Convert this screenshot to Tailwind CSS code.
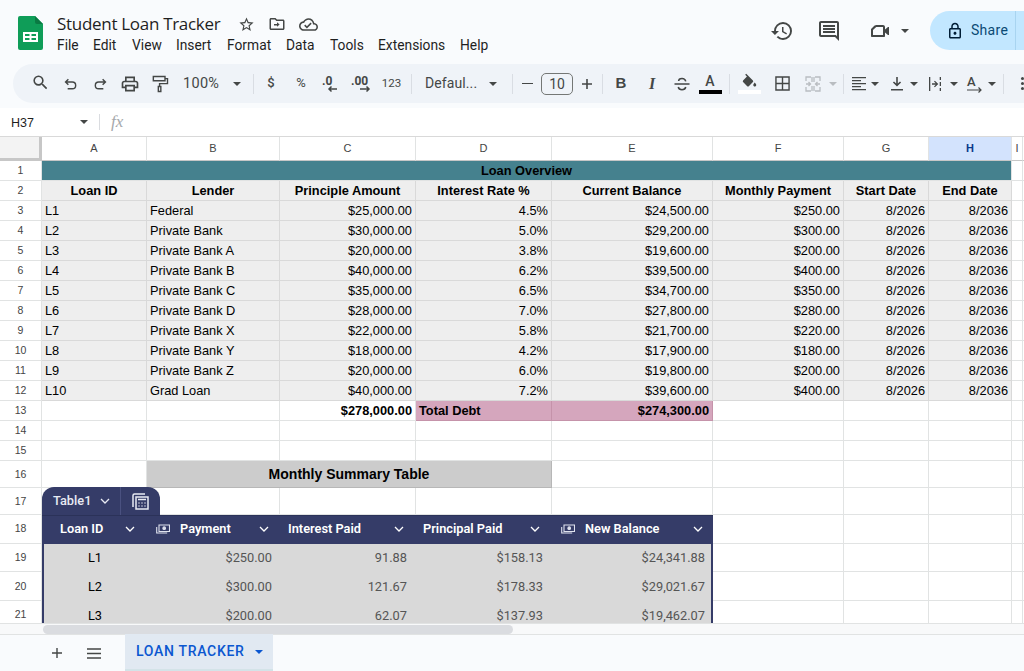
<!DOCTYPE html>
<html>
<head>
<meta charset="utf-8">
<script src="https://cdn.jsdelivr.net/npm/@tailwindcss/browser@4"></script>
<title>Student Loan Tracker</title>
</head>
<body class="w-[1024px] h-[671px] overflow-hidden bg-[#f9fbfd] font-['Roboto',sans-serif] text-[#444746]">
<div class="flex flex-col h-[671px]">

<!-- Title bar -->
<header class="h-[64px] shrink-0 flex items-start overflow-hidden">
  <svg class="ml-[18px] mt-[16px] shrink-0" width="25" height="34" viewBox="0 0 25 34"><path d="M2 0h15l8 8v24a2 2 0 0 1-2 2H2a2 2 0 0 1-2-2V2a2 2 0 0 1 2-2z" fill="#0f9d58"/><path d="M17 0l8 8h-6a2 2 0 0 1-2-2z" fill="#0a7a43"/><path d="M5 16h15v10H5z" fill="#fff"/><path d="M7 18h4.5v2H7zM13.5 18H18v2h-4.5zM7 22h4.5v2H7zM13.5 22H18v2h-4.5z" fill="#0f9d58"/></svg>
  <div class="ml-[14px] mt-[12px] w-[450px] shrink-0">
    <div class="flex items-center h-[24px]">
      <span class="font-['Open_Sans',sans-serif] text-[17px] text-[#1f1f1f] w-[182px] tracking-[-0.3px] whitespace-nowrap">Student Loan Tracker</span>
      <svg class="w-[17px] h-[17px] -ml-[1px] fill-[#444746]" viewBox="0 0 24 24"><path d="M22 9.24l-7.19-.62L12 2 9.19 8.63 2 9.24l5.46 4.73L5.82 21 12 17.27 18.18 21l-1.63-7.03L22 9.24zM12 15.4l-3.76 2.27 1-4.28-3.32-2.88 4.38-.38L12 6.1l1.71 4.04 4.38.38-3.32 2.88 1 4.28L12 15.4z"/></svg>
      <svg class="w-[18px] h-[18px] ml-[13px] fill-[#444746]" viewBox="0 0 24 24"><path d="M20 6h-8l-2-2H4c-1.1 0-2 .9-2 2v12c0 1.1.9 2 2 2h16c1.1 0 2-.9 2-2V8c0-1.1-.9-2-2-2zm0 12H4V6h5.17l2 2H20v10zm-8-2.5V14H8v-2h4v-2.5l3.5 3z"/></svg>
      <svg class="w-[19px] h-[19px] ml-[13px] fill-[#444746]" viewBox="0 0 24 24"><path d="M19.35 10.04C18.67 6.59 15.64 4 12 4 9.11 4 6.6 5.64 5.35 8.04 2.34 8.36 0 10.91 0 14c0 3.31 2.69 6 6 6h13c2.76 0 5-2.24 5-5 0-2.64-2.05-4.78-4.65-4.96zM19 18H6c-2.21 0-4-1.79-4-4 0-2.05 1.53-3.76 3.56-3.97l1.07-.11.5-.95C8.08 7.14 9.94 6 12 6c2.62 0 4.88 1.86 5.39 4.43l.3 1.5 1.53.11c1.56.1 2.78 1.41 2.78 2.96 0 1.65-1.35 3-3 3zm-9-3.82l-2.09-2.09L6.5 13.5 10 17l6.01-6.01-1.41-1.41z"/></svg>
    </div>
    <nav class="flex h-[19px] items-center text-[13.8px] text-[#1f1f1f] *:shrink-0">
      <span class="w-[36px]">File</span><span class="w-[39px]">Edit</span><span class="w-[44px]">View</span><span class="w-[51px]">Insert</span><span class="w-[59px]">Format</span><span class="w-[44px]">Data</span><span class="w-[48px]">Tools</span><span class="w-[82px]">Extensions</span><span>Help</span>
    </nav>
  </div>
  <div class="ml-auto mr-[-20px] mt-[11px] flex items-center shrink-0">
    <svg class="w-[24px] h-[24px] fill-[#444746]" viewBox="0 0 24 24"><path d="M13 3a9 9 0 0 0-9 9H1l3.89 3.89.07.14L9 12H6c0-3.87 3.13-7 7-7s7 3.13 7 7-3.13 7-7 7c-1.93 0-3.68-.79-4.94-2.06l-1.42 1.42A8.954 8.954 0 0 0 13 21a9 9 0 0 0 0-18zm-1 5v5l4.28 2.54.72-1.21-3.5-2.08V8H12z"/></svg>
    <svg class="w-[24px] h-[24px] ml-[23px] fill-[#444746]" viewBox="0 0 24 24"><path d="M20 2H4c-1.1 0-2 .9-2 2v12c0 1.1.9 2 2 2h14l4 4V4c0-1.1-.9-2-2-2zm0 15.17L18.83 16H4V4h16v13.17zM6 12h12v2H6zM6 9h12v2H6zM6 6h12v2H6z"/></svg>
    <svg class="w-[24px] h-[24px] ml-[27px] fill-[#444746]" viewBox="0 0 24 24"><path d="M8 6h7c1.1 0 2 .9 2 2v2.5l3-2.5h1v8h-1l-3-2.5V17c0 .6-.4 1-1 1H4c-.6 0-1-.4-1-1v-6.5c0-.3.1-.5.3-.7l3-3c.2-.2.4-.3.7-.3zm.2 2L5 11v5h10V8H8.2z"/></svg>
    <svg class="w-[8px] h-[4px] ml-[9px] fill-[#444746]" viewBox="0 0 8 4"><path d="M0 0h8L4 4z"/></svg>
    <div class="ml-[21px] w-[114px] h-[39px] rounded-l-full bg-[#c2e7ff] flex items-center pl-[17px]">
      <svg class="w-[16px] h-[18px] fill-[#001d35]" viewBox="2 0 20 24"><path d="M18 8h-1V6c0-2.76-2.24-5-5-5S7 3.24 7 6v2H6c-1.1 0-2 .9-2 2v10c0 1.1.9 2 2 2h12c1.1 0 2-.9 2-2V10c0-1.1-.9-2-2-2zM9 6c0-1.66 1.34-3 3-3s3 1.34 3 3v2H9V6zm9 14H6V10h12v10zm-6-3c1.1 0 2-.9 2-2s-.9-2-2-2-2 .9-2 2 .9 2 2 2z"/></svg>
      <span class="ml-[8px] text-[14px] font-normal tracking-[0.3px] text-[#0b4a74]">Share</span>
      <span class="ml-[7px] w-px h-[39px] bg-[#a8d4f0]"></span>
    </div>
  </div>
</header>

<!-- Toolbar -->
<div class="h-[39px] shrink-0 ml-[13px] mr-[-30px] rounded-l-full bg-[#eff3f8] flex items-center pl-[13px] text-[#444746] overflow-hidden *:shrink-0">
  <span class="w-[29px] flex justify-center"><svg class="w-[19px] h-[19px] -translate-y-[1px] fill-[#444746]" viewBox="0 0 24 24"><path d="M15.5 14h-.79l-.28-.27A6.471 6.471 0 0 0 16 9.5 6.5 6.5 0 1 0 9.5 16c1.61 0 3.09-.59 4.23-1.57l.27.28v.79l5 4.99L20.49 19l-4.99-5zm-6 0C7.01 14 5 11.99 5 9.5S7.01 5 9.500 5 14 7.010 14 9.500 11.990 14 9.500 14z"/></svg></span>
  <span class="w-[30px] flex justify-center"><svg class="w-[17px] h-[17px] translate-y-[1px] fill-none stroke-[#444746] stroke-2" viewBox="0 0 24 24"><path d="M9 4.500 5 8.500l4 4M5 8.500h9.500a4.800 4.800 0 0 1 0 9.600H8"/></svg></span>
  <span class="w-[30px] flex justify-center"><svg class="w-[17px] h-[17px] translate-y-[1px] fill-none stroke-[#444746] stroke-2" viewBox="0 0 24 24"><path d="m15 4.500 4 4-4 4M19 8.500H9.500a4.800 4.800 0 0 0 0 9.600H16"/></svg></span>
  <span class="w-[30px] flex justify-center"><svg class="w-[20px] h-[20px] fill-[#444746]" viewBox="0 0 24 24"><path d="M19 8h-1V3H6v5H5c-1.66 0-3 1.34-3 3v6h4v4h12v-4h4v-6c0-1.66-1.34-3-3-3zM8 5h8v3H8V5zm8 12v2H8v-4h8v2zm2-2v-2H6v2H4v-4c0-.55.45-1 1-1h14c.55 0 1 .45 1 1v4h-2z"/></svg></span>
  <span class="w-[29px] flex justify-center"><svg class="w-[20px] h-[20px] fill-none stroke-[#444746] stroke-[1.7]" viewBox="0 0 24 24"><path d="M4 3h14v5H4zM18 5.500h3v6h-9.500V15M10 15h3v6h-3z"/></svg></span>
  <span class="ml-[9px] w-[49px] text-[14.5px] tracking-[0.3px]">100%</span>
  <svg class="ml-[1px] w-[8px] h-[4px] fill-[#444746]" viewBox="0 0 8 4"><path d="M0 0h8L4 4z"/></svg>
  <span class="ml-[12px] w-px h-[20px] bg-[#d9dde3]"></span>
  <span class="ml-[2px] w-[30px] text-center text-[13px] font-medium -translate-y-[1px]">$</span>
  <span class="w-[30px] text-center text-[13px] -translate-y-[1px]">%</span>
  <span class="w-[30px] flex justify-center"><svg class="w-[22px] h-[22px]" viewBox="0 0 22 22"><text x="2" y="12" font-size="12" font-weight="700" fill="#444746" font-family="Roboto">.0</text><path d="M17 16H9M11.500 13.500 9 16l2.500 2.500" fill="none" stroke="#444746" stroke-width="1.5"/></svg></span>
  <span class="w-[31px] flex justify-center"><svg class="w-[24px] h-[22px]" viewBox="0 0 24 22"><text x="1" y="12" font-size="12" font-weight="700" fill="#444746" font-family="Roboto">.00</text><path d="M10 16h9M16.500 13.500 19 16l-2.500 2.500" fill="none" stroke="#444746" stroke-width="1.5"/></svg></span>
  <span class="w-[29px] text-center text-[11.5px]">123</span>
  <span class="ml-[5px] w-px h-[20px] bg-[#d9dde3]"></span>
  <span class="ml-[13px] w-[64px] text-[14px] tracking-[0.1px]">Defaul...</span>
  <svg class="w-[8px] h-[4px] fill-[#444746]" viewBox="0 0 8 4"><path d="M0 0h8L4 4z"/></svg>
  <span class="ml-[15px] w-px h-[20px] bg-[#d9dde3]"></span>
  <span class="ml-[9px] w-[11px] h-[1.5px] bg-[#444746]"></span>
  <span class="ml-[8px] w-[32px] h-[22px] rounded-[5px] border border-[#747775] text-center text-[14px] leading-[20px]">10</span>
  <svg class="ml-[8px] w-[12px] h-[12px] fill-[#444746]" viewBox="0 0 12 12"><path d="M5.200 1h1.600v4.200H11v1.600H6.800V11H5.200V6.800H1V5.200h4.200z"/></svg>
  <span class="ml-[9px] w-px h-[20px] bg-[#d9dde3]"></span>
  <span class="ml-[12px] w-[12px] text-center text-[15px] font-bold font-['Liberation_Sans',sans-serif]">B</span>
  <span class="ml-[19px] w-[12px] text-center text-[16px] font-bold italic font-['Liberation_Serif',serif]">I</span>
  <span class="ml-[9px] w-[30px] flex justify-center"><svg class="w-[18px] h-[18px] fill-none stroke-[#444746] stroke-2" viewBox="0 0 24 24"><path d="M2 12h20M17 8.500C16.500 6 14.500 4.500 12 4.500S7.500 6 7.500 8M7 16c.5 2.500 2.500 3.500 5 3.500s4.500-1 5-3.500"/></svg></span>
  <span class="ml-[1px] w-[24px] flex flex-col items-center"><span class="text-[14px] leading-[14px] font-medium">A</span><span class="mt-[2px] w-[23px] h-[4px] bg-black"></span></span>
  <span class="ml-[7px] w-px h-[20px] bg-[#d9dde3]"></span>
  <span class="ml-[8px] w-[23px] flex flex-col items-center"><svg class="w-[15px] h-[15px] fill-[#444746]" viewBox="2 0 20 18"><path d="M16.560 8.940 7.620 0 6.210 1.410l2.380 2.380-5.150 5.150c-.59.59-.59 1.540 0 2.120l5.500 5.500c.29.29.68.44 1.060.44s.77-.15 1.060-.44l5.500-5.500c.59-.58.59-1.530 0-2.120zM19 11.500s-2 2.170-2 3.500c0 1.100.9 2 2 2s2-.9 2-2c0-1.330-2-3.500-2-3.500z"/></svg><span class="mt-[2px] w-[23px] h-[4px] bg-white"></span></span>
  <span class="ml-[11px] w-[20px] flex justify-center"><svg class="w-[15px] h-[15px] fill-none stroke-[#444746] stroke-[1.5]" viewBox="0 0 16 16"><path d="M1 1h14v14H1zM8 1v14M1 8h14"/></svg></span>
  <span class="ml-[13px] w-[16px] flex justify-center"><svg class="w-[16px] h-[16px] fill-none stroke-[#b9bdc1] stroke-[1.3]" viewBox="0 0 16 16"><path d="M1 5V1h5M10 1h5v4M1 11v4h5M10 15h5v-4M1 8h4M3.500 6 5.500 8l-2 2M15 8h-4M12.500 6l-2 2 2 2M7 1v5M9 1v5M7 10v5M9 10v5"/></svg></span>
  <svg class="ml-[8px] w-[8px] h-[4px] fill-[#b9bdc1]" viewBox="0 0 8 4"><path d="M0 0h8L4 4z"/></svg>
  <span class="ml-[6px] w-px h-[20px] bg-[#d9dde3]"></span>
  <svg class="ml-[8px] w-[14px] h-[14px] fill-[#444746]" viewBox="0 0 14 14"><path d="M0 0h14v1.200H0zM0 3h9v1.200H0zM0 6h14v1.200H0zM0 9h9v1.200H0zM0 12h14v1.200H0z"/></svg>
  <svg class="ml-[5px] w-[8px] h-[4px] fill-[#444746]" viewBox="0 0 8 4"><path d="M0 0h8L4 4z"/></svg>
  <svg class="ml-[12px] w-[12px] h-[14px] fill-[#444746]" viewBox="0 0 12 14"><path d="M5.200 0h1.600v6.500L9 4.400l1.100 1.100L6 9.600 1.900 5.500 3 4.400l2.200 2.100zM0 12h12v1.500H0z"/></svg>
  <svg class="ml-[7px] w-[8px] h-[4px] fill-[#444746]" viewBox="0 0 8 4"><path d="M0 0h8L4 4z"/></svg>
  <svg class="ml-[11px] w-[12px] h-[14px] fill-[#444746]" viewBox="0 0 12 14"><path d="M0 0h1.300v14H0zM10.700 0H12v3h-1.300zM10.700 5H12v4h-1.300zM10.700 11H12v3h-1.300zM3 6.350h3.700L5 4.600l.9-.9L9.300 7l-3.400 3.300-.9-.9 1.700-1.750H3z"/></svg>
  <svg class="ml-[9px] w-[8px] h-[4px] fill-[#444746]" viewBox="0 0 8 4"><path d="M0 0h8L4 4z"/></svg>
  <span class="ml-[9px] w-[15px] h-[18px] relative text-[13px] leading-[13px] font-medium">A<svg class="absolute left-0 top-[12px] w-[16px] h-[6px] fill-none stroke-[#444746] stroke-[1.2]" viewBox="0 0 16 6"><path d="M0 3h14M11.500.5 14 3l-2.500 2.500"/></svg></span>
  <svg class="ml-[6px] w-[8px] h-[4px] fill-[#444746]" viewBox="0 0 8 4"><path d="M0 0h8L4 4z"/></svg>
  <span class="ml-[7px] w-px h-[20px] bg-[#d9dde3]"></span>
  <span class="ml-[17px] flex flex-col gap-[2px]"><span class="w-[3px] h-[3px] rounded-full bg-[#444746]"></span><span class="w-[3px] h-[3px] rounded-full bg-[#444746]"></span><span class="w-[3px] h-[3px] rounded-full bg-[#444746]"></span></span>
</div>

<!-- Formula bar -->
<div class="mt-[5px] h-[29px] shrink-0 bg-white flex items-center border-b border-[#d9d9d9] font-['Liberation_Sans',sans-serif]">
  <span class="ml-[11px] w-[69px] text-[12.5px] text-[#1f1f1f] translate-y-[1px]">H37</span>
  <svg class="w-[8px] h-[4px] fill-[#444746]" viewBox="0 0 8 4"><path d="M0 0h8L4 4z"/></svg>
  <span class="ml-[11px] w-px h-[16px] bg-[#dadce0]"></span>
  <span class="ml-[11px] text-[17px] italic font-['Liberation_Serif',serif] text-[#a5a8ab]">fx</span>
</div>

<!-- Sheet -->
<div class="relative h-[486px] shrink-0 bg-white overflow-hidden font-['Liberation_Sans',sans-serif] text-[12.8px] text-black">
  <div class="grid grid-cols-[42px_105px_133px_136px_136px_161px_131px_85px_83px_11px_2px] grid-rows-[24px_repeat(15,20px)_27px_27px_29px_28px_29px_28px] *:border-r *:border-b *:border-[#e1e3e3] *:px-[3px] *:leading-[19px] *:whitespace-nowrap *:overflow-hidden">
    <div class="bg-[#f3f3f3] border-r-[3px]! border-b-[3px]! border-[#c7c7c7]!"></div>
    <div class="text-center text-[11px] text-[#444] leading-[23px]! border-b-[#c7c7c7]!">A</div><div class="text-center text-[11px] text-[#444] leading-[23px]! border-b-[#c7c7c7]!">B</div><div class="text-center text-[11px] text-[#444] leading-[23px]! border-b-[#c7c7c7]!">C</div><div class="text-center text-[11px] text-[#444] leading-[23px]! border-b-[#c7c7c7]!">D</div><div class="text-center text-[11px] text-[#444] leading-[23px]! border-b-[#c7c7c7]!">E</div><div class="text-center text-[11px] text-[#444] leading-[23px]! border-b-[#c7c7c7]!">F</div><div class="text-center text-[11px] text-[#444] leading-[23px]! border-b-[#c7c7c7]!">G</div><div class="text-center text-[11px] font-bold text-[#0b3a8a] bg-[#d3e3fd] leading-[23px]! border-b-[#c7c7c7]!">H</div><div class="text-center text-[11px] text-[#444] leading-[23px]! border-b-[#c7c7c7]! px-0!">I</div><div class="border-b-[#c7c7c7]!"></div>

    <div class="text-center text-[10.5px] text-[#444]">1</div><div class="col-span-8 bg-[#45818e] text-center font-bold">Loan Overview</div><div></div><div></div>
    <div class="text-center text-[10.5px] text-[#444]">2</div><div class="bg-[#eee] text-center font-bold border-[#d9d9d9]!">Loan ID</div><div class="bg-[#eee] text-center font-bold border-[#d9d9d9]!">Lender</div><div class="bg-[#eee] text-center font-bold border-[#d9d9d9]!">Principle Amount</div><div class="bg-[#eee] text-center font-bold border-[#d9d9d9]!">Interest Rate %</div><div class="bg-[#eee] text-center font-bold border-[#d9d9d9]!">Current Balance</div><div class="bg-[#eee] text-center font-bold border-[#d9d9d9]!">Monthly Payment</div><div class="bg-[#eee] text-center font-bold border-[#d9d9d9]!">Start Date</div><div class="bg-[#eee] text-center font-bold border-[#d9d9d9]!">End Date</div><div></div><div></div>

    <div class="text-center text-[10.5px] text-[#444]">3</div><div class="bg-[#eee] border-[#d9d9d9]!">L1</div><div class="bg-[#eee] border-[#d9d9d9]!">Federal</div><div class="bg-[#eee] text-right border-[#d9d9d9]!">$25,000.00</div><div class="bg-[#eee] text-right border-[#d9d9d9]!">4.5%</div><div class="bg-[#eee] text-right border-[#d9d9d9]!">$24,500.00</div><div class="bg-[#eee] text-right border-[#d9d9d9]!">$250.00</div><div class="bg-[#eee] text-right border-[#d9d9d9]!">8/2026</div><div class="bg-[#eee] text-right border-[#d9d9d9]!">8/2036</div><div></div><div></div>
    <div class="text-center text-[10.5px] text-[#444]">4</div><div class="bg-[#eee] border-[#d9d9d9]!">L2</div><div class="bg-[#eee] border-[#d9d9d9]!">Private Bank</div><div class="bg-[#eee] text-right border-[#d9d9d9]!">$30,000.00</div><div class="bg-[#eee] text-right border-[#d9d9d9]!">5.0%</div><div class="bg-[#eee] text-right border-[#d9d9d9]!">$29,200.00</div><div class="bg-[#eee] text-right border-[#d9d9d9]!">$300.00</div><div class="bg-[#eee] text-right border-[#d9d9d9]!">8/2026</div><div class="bg-[#eee] text-right border-[#d9d9d9]!">8/2036</div><div></div><div></div>
    <div class="text-center text-[10.5px] text-[#444]">5</div><div class="bg-[#eee] border-[#d9d9d9]!">L3</div><div class="bg-[#eee] border-[#d9d9d9]!">Private Bank A</div><div class="bg-[#eee] text-right border-[#d9d9d9]!">$20,000.00</div><div class="bg-[#eee] text-right border-[#d9d9d9]!">3.8%</div><div class="bg-[#eee] text-right border-[#d9d9d9]!">$19,600.00</div><div class="bg-[#eee] text-right border-[#d9d9d9]!">$200.00</div><div class="bg-[#eee] text-right border-[#d9d9d9]!">8/2026</div><div class="bg-[#eee] text-right border-[#d9d9d9]!">8/2036</div><div></div><div></div>
    <div class="text-center text-[10.5px] text-[#444]">6</div><div class="bg-[#eee] border-[#d9d9d9]!">L4</div><div class="bg-[#eee] border-[#d9d9d9]!">Private Bank B</div><div class="bg-[#eee] text-right border-[#d9d9d9]!">$40,000.00</div><div class="bg-[#eee] text-right border-[#d9d9d9]!">6.2%</div><div class="bg-[#eee] text-right border-[#d9d9d9]!">$39,500.00</div><div class="bg-[#eee] text-right border-[#d9d9d9]!">$400.00</div><div class="bg-[#eee] text-right border-[#d9d9d9]!">8/2026</div><div class="bg-[#eee] text-right border-[#d9d9d9]!">8/2036</div><div></div><div></div>
    <div class="text-center text-[10.5px] text-[#444]">7</div><div class="bg-[#eee] border-[#d9d9d9]!">L5</div><div class="bg-[#eee] border-[#d9d9d9]!">Private Bank C</div><div class="bg-[#eee] text-right border-[#d9d9d9]!">$35,000.00</div><div class="bg-[#eee] text-right border-[#d9d9d9]!">6.5%</div><div class="bg-[#eee] text-right border-[#d9d9d9]!">$34,700.00</div><div class="bg-[#eee] text-right border-[#d9d9d9]!">$350.00</div><div class="bg-[#eee] text-right border-[#d9d9d9]!">8/2026</div><div class="bg-[#eee] text-right border-[#d9d9d9]!">8/2036</div><div></div><div></div>
    <div class="text-center text-[10.5px] text-[#444]">8</div><div class="bg-[#eee] border-[#d9d9d9]!">L6</div><div class="bg-[#eee] border-[#d9d9d9]!">Private Bank D</div><div class="bg-[#eee] text-right border-[#d9d9d9]!">$28,000.00</div><div class="bg-[#eee] text-right border-[#d9d9d9]!">7.0%</div><div class="bg-[#eee] text-right border-[#d9d9d9]!">$27,800.00</div><div class="bg-[#eee] text-right border-[#d9d9d9]!">$280.00</div><div class="bg-[#eee] text-right border-[#d9d9d9]!">8/2026</div><div class="bg-[#eee] text-right border-[#d9d9d9]!">8/2036</div><div></div><div></div>
    <div class="text-center text-[10.5px] text-[#444]">9</div><div class="bg-[#eee] border-[#d9d9d9]!">L7</div><div class="bg-[#eee] border-[#d9d9d9]!">Private Bank X</div><div class="bg-[#eee] text-right border-[#d9d9d9]!">$22,000.00</div><div class="bg-[#eee] text-right border-[#d9d9d9]!">5.8%</div><div class="bg-[#eee] text-right border-[#d9d9d9]!">$21,700.00</div><div class="bg-[#eee] text-right border-[#d9d9d9]!">$220.00</div><div class="bg-[#eee] text-right border-[#d9d9d9]!">8/2026</div><div class="bg-[#eee] text-right border-[#d9d9d9]!">8/2036</div><div></div><div></div>
    <div class="text-center text-[10.5px] text-[#444]">10</div><div class="bg-[#eee] border-[#d9d9d9]!">L8</div><div class="bg-[#eee] border-[#d9d9d9]!">Private Bank Y</div><div class="bg-[#eee] text-right border-[#d9d9d9]!">$18,000.00</div><div class="bg-[#eee] text-right border-[#d9d9d9]!">4.2%</div><div class="bg-[#eee] text-right border-[#d9d9d9]!">$17,900.00</div><div class="bg-[#eee] text-right border-[#d9d9d9]!">$180.00</div><div class="bg-[#eee] text-right border-[#d9d9d9]!">8/2026</div><div class="bg-[#eee] text-right border-[#d9d9d9]!">8/2036</div><div></div><div></div>
    <div class="text-center text-[10.5px] text-[#444]">11</div><div class="bg-[#eee] border-[#d9d9d9]!">L9</div><div class="bg-[#eee] border-[#d9d9d9]!">Private Bank Z</div><div class="bg-[#eee] text-right border-[#d9d9d9]!">$20,000.00</div><div class="bg-[#eee] text-right border-[#d9d9d9]!">6.0%</div><div class="bg-[#eee] text-right border-[#d9d9d9]!">$19,800.00</div><div class="bg-[#eee] text-right border-[#d9d9d9]!">$200.00</div><div class="bg-[#eee] text-right border-[#d9d9d9]!">8/2026</div><div class="bg-[#eee] text-right border-[#d9d9d9]!">8/2036</div><div></div><div></div>
    <div class="text-center text-[10.5px] text-[#444]">12</div><div class="bg-[#eee] border-[#d9d9d9]!">L10</div><div class="bg-[#eee] border-[#d9d9d9]!">Grad Loan</div><div class="bg-[#eee] text-right border-[#d9d9d9]!">$40,000.00</div><div class="bg-[#eee] text-right border-[#d9d9d9]!">7.2%</div><div class="bg-[#eee] text-right border-[#d9d9d9]!">$39,600.00</div><div class="bg-[#eee] text-right border-[#d9d9d9]!">$400.00</div><div class="bg-[#eee] text-right border-[#d9d9d9]!">8/2026</div><div class="bg-[#eee] text-right border-[#d9d9d9]!">8/2036</div><div></div><div></div>

    <div class="text-center text-[10.5px] text-[#444]">13</div><div></div><div></div><div class="text-right font-bold">$278,000.00</div><div class="bg-[#d5a6bd] font-bold border-[#c593aa]!">Total Debt</div><div class="bg-[#d5a6bd] text-right font-bold border-[#c593aa]!">$274,300.00</div><div></div><div></div><div></div><div></div><div></div>
    <div class="text-center text-[10.5px] text-[#444]">14</div><div></div><div></div><div></div><div></div><div></div><div></div><div></div><div></div><div></div><div></div>
    <div class="text-center text-[10.5px] text-[#444]">15</div><div></div><div></div><div></div><div></div><div></div><div></div><div></div><div></div><div></div><div></div>
    <div class="text-center text-[10.5px] text-[#444] leading-[26px]!">16</div><div></div><div class="col-span-3 bg-[#ccc] text-center font-bold text-[14px] leading-[26px]! border-[#b7b7b7]!">Monthly Summary Table</div><div></div><div></div><div></div><div></div><div></div><div></div>
    <div class="text-center text-[10.5px] text-[#444] leading-[26px]!">17</div><div></div><div></div><div></div><div></div><div></div><div></div><div></div><div></div><div></div><div></div>
    <div class="text-center text-[10.5px] text-[#444] leading-[27px]!">18</div><div></div><div></div><div></div><div></div><div></div><div></div><div></div><div></div><div></div><div></div>
    <div class="text-center text-[10.5px] text-[#444] leading-[27px]!">19</div><div></div><div></div><div></div><div></div><div></div><div></div><div></div><div></div><div></div><div></div>
    <div class="text-center text-[10.5px] text-[#444] leading-[28px]!">20</div><div></div><div></div><div></div><div></div><div></div><div></div><div></div><div></div><div></div><div></div>
    <div class="text-center text-[10.5px] text-[#444] leading-[27px]!">21</div><div></div><div></div><div></div><div></div><div></div><div></div><div></div><div></div><div></div><div></div>
  </div>

  <!-- Table overlay -->
  <div class="absolute left-[42px] top-[350px] w-[671px] font-['Roboto',sans-serif]">
    <div class="w-[118px] h-[28px] rounded-t-[12px] bg-[#353c68] flex items-center text-white">
      <span class="ml-[11px] w-[41px] text-[12.8px] font-medium text-[#e8eaf3]">Table1</span>
      <svg class="ml-[6px] w-[10px] h-[6px] fill-none stroke-[#e8eaf3] stroke-[1.3]" viewBox="0 0 10 6"><path d="m1 1 4 4 4-4"/></svg>
      <span class="ml-[10px] w-px h-[28px] bg-[#4a5180]"></span>
      <svg class="ml-[11px] w-[17px] h-[17px] fill-none stroke-[#e8eaf3] stroke-[1.5]" viewBox="0 0 17 17"><path d="M1 14V2.500A1.500 1.500 0 0 1 2.500 1H13M4 4h12v12H4zM6 6.500h8M6.500 10h1M9.500 10h1M12.500 10h1M6.500 13h1M9.500 13h1M12.500 13h1"/></svg>
    </div>
    <div class="grid grid-cols-[104px_133px_136px_136px_162px] h-[29px] pb-[2px] bg-[#353c68] text-white font-semibold text-[12.8px] border-t border-[#2b3259]">
      <div class="flex items-center pl-[18px]"><span class="w-[65px]">Loan ID</span><svg class="w-[10px] h-[6px] fill-none stroke-white stroke-[1.3]" viewBox="0 0 10 6"><path d="m1 1 4 4 4-4"/></svg></div>
      <div class="flex items-center pl-[10px]"><svg class="w-[14px] h-[10px] fill-none stroke-[#dfe2ee] stroke-[1.1]" viewBox="0 0 14 10"><path d="M3 1h10.500v6.500H3zM.7 3v6h10.500"/><circle cx="8.200" cy="4.200" r="1.300" fill="#dfe2ee"/></svg><span class="ml-[10px] w-[79px]">Payment</span><svg class="w-[10px] h-[6px] fill-none stroke-white stroke-[1.3]" viewBox="0 0 10 6"><path d="m1 1 4 4 4-4"/></svg></div>
      <div class="flex items-center pl-[9px]"><span class="w-[106px]">Interest Paid</span><svg class="w-[10px] h-[6px] fill-none stroke-white stroke-[1.3]" viewBox="0 0 10 6"><path d="m1 1 4 4 4-4"/></svg></div>
      <div class="flex items-center pl-[8px]"><span class="w-[107px]">Principal Paid</span><svg class="w-[10px] h-[6px] fill-none stroke-white stroke-[1.3]" viewBox="0 0 10 6"><path d="m1 1 4 4 4-4"/></svg></div>
      <div class="flex items-center pl-[10px]"><svg class="w-[14px] h-[10px] fill-none stroke-[#dfe2ee] stroke-[1.1]" viewBox="0 0 14 10"><path d="M3 1h10.500v6.500H3zM.7 3v6h10.500"/><circle cx="8.200" cy="4.200" r="1.300" fill="#dfe2ee"/></svg><span class="ml-[10px] w-[108px]">New Balance</span><svg class="w-[10px] h-[6px] fill-none stroke-white stroke-[1.3]" viewBox="0 0 10 6"><path d="m1 1 4 4 4-4"/></svg></div>
    </div>
    <div class="grid grid-cols-[102px_133px_136px_136px_160px] grid-rows-[29px_29px_28px] bg-[#d9d9d9] border-x-2 border-[#353c68] text-[12.8px] leading-[28px] text-[#555] *:text-right *:pr-[8px]">
      <div class="text-center! text-black pr-0!">L1</div><div class="pr-[7px]!">$250.00</div><div>91.88</div><div>$158.13</div><div class="pr-[6px]!">$24,341.88</div>
      <div class="text-center! text-black pr-0!">L2</div><div class="pr-[7px]!">$300.00</div><div>121.67</div><div>$178.33</div><div class="pr-[6px]!">$29,021.67</div>
      <div class="text-center! text-black pr-0!">L3</div><div class="pr-[7px]!">$200.00</div><div>62.07</div><div>$137.93</div><div class="pr-[6px]!">$19,462.07</div>
    </div>
  </div>
</div>

<!-- Scrollbar -->
<div class="h-[11px] shrink-0 bg-[#f8f9fa] border-t border-[#e1e3e3] flex items-center">
  <span class="ml-[43px] w-[470px] h-[9px] rounded-full bg-[#dadce0]"></span>
</div>

<!-- Tab bar -->
<footer class="h-[37px] shrink-0 bg-[#f9fbfd] border-t border-[#e1e3e3] flex items-stretch">
  <span class="ml-[51px] w-[12px] flex items-center"><svg class="w-[12px] h-[12px] fill-[#444746]" viewBox="0 0 12 12"><path d="M5.300 1h1.400v4.300H11v1.400H6.700V11H5.300V6.700H1V5.300h4.300z"/></svg></span>
  <span class="ml-[24px] w-[14px] flex items-center"><svg class="w-[15px] h-[11px] fill-[#444746]" viewBox="0 0 15 11"><path d="M0 0h15v1.500H0zM0 4.700h15v1.500H0zM0 9.500h15V11H0z"/></svg></span>
  <div class="ml-[24px] w-[148px] bg-[#e1e9f2] border-b-2 border-[#d3e3e8] flex items-center pl-[11px] -mt-px">
    <span class="text-[14px] font-medium tracking-[0.7px] text-[#0b57d0] whitespace-nowrap">LOAN TRACKER</span>
    <svg class="ml-[10px] w-[8px] h-[4px] fill-[#0b57d0]" viewBox="0 0 8 4"><path d="M0 0h8L4 4z"/></svg>
  </div>
</footer>
</div>
</body>
</html>
